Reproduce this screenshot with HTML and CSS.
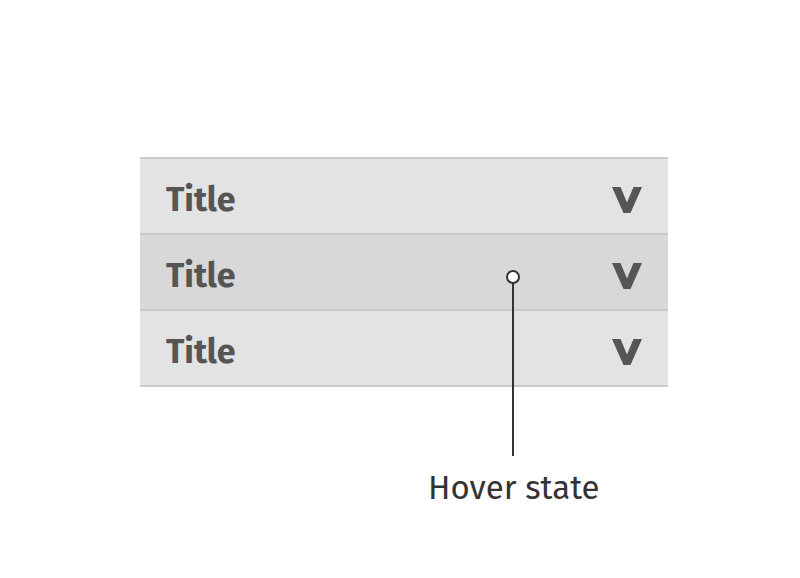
FILE: index.html
```html
<!DOCTYPE html>
<html>
<head>
<meta charset="utf-8">
<link rel="stylesheet" href="styles.css">
</head>
<body>
<div class="stage">
  <div class="accordion">
    <div class="row"><span class="title">Title</span><svg class="chev" width="30" height="26" viewBox="0 0 30 26"><path d="M0 0H8.5L15 15.5L21.5 0H30L18.5 26H11.5Z" fill="#555"/></svg></div>
    <div class="row hover"><span class="title">Title</span><svg class="chev" width="30" height="26" viewBox="0 0 30 26"><path d="M0 0H8.5L15 15.5L21.5 0H30L18.5 26H11.5Z" fill="#555"/></svg></div>
    <div class="row"><span class="title">Title</span><svg class="chev" width="30" height="26" viewBox="0 0 30 26"><path d="M0 0H8.5L15 15.5L21.5 0H30L18.5 26H11.5Z" fill="#555"/></svg></div>
  </div>
  <div class="marker"></div>
  <div class="leader"></div>
  <div class="label">Hover state</div>
</div>
</body>
</html>
```
FILE: styles.css
```css
html, body {
  margin: 0;
  padding: 0;
  background: #fff;
}
.stage {
  position: relative;
  width: 800px;
  height: 578px;
  padding-top: 157px;
  box-sizing: border-box;
}
.accordion {
  margin-left: 140px;
  width: 528px;
  border-top: 2px solid #c9c9c9;
}
.row {
  height: 74px;
  border-bottom: 2px solid #c9c9c9;
  background: #e3e3e3;
  display: flex;
  align-items: center;
  justify-content: space-between;
  padding: 0 26px;
}
.row.hover {
  background: #d8d8d8;
}
.title {
  font-family: "Fira Sans", "Open Sans", "Noto Sans", sans-serif;
  font-weight: 700;
  font-size: 34px;
  line-height: 40px;
  color: #555;
  padding-top: 7px;
}
.chev {
  display: block;
  margin-top: 7px;
}
.marker {
  position: absolute;
  left: 506px;
  top: 270px;
  width: 10px;
  height: 10px;
  border: 2px solid #333;
  border-radius: 50%;
  background: #fff;
  z-index: 2;
}
.leader {
  position: absolute;
  left: 512px;
  top: 282px;
  width: 2px;
  height: 174px;
  background: #333;
}
.label {
  position: absolute;
  left: 428px;
  top: 468px;
  font-family: "Fira Sans", "Open Sans", sans-serif;
  font-size: 33px;
  color: #333;
  line-height: 40px;
}
```
